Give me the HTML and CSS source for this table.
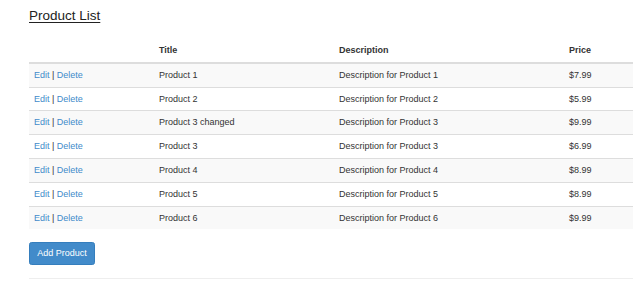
FILE: index.html
```html
<!DOCTYPE html>
<html>
<head>
<meta charset="utf-8">
<title>Product List</title>
<link rel="stylesheet" href="styles.css">
</head>
<body>
<div class="container">
  <h2 class="page-title">Product List</h2>
  <table class="table">
    <thead>
      <tr>
        <th class="col-actions"></th>
        <th class="col-title">Title</th>
        <th class="col-desc">Description</th>
        <th class="col-price">Price</th>
      </tr>
    </thead>
    <tbody>
      <tr><td><a href="#">Edit</a> | <a href="#">Delete</a></td><td>Product 1</td><td>Description for Product 1</td><td>$7.99</td></tr>
      <tr><td><a href="#">Edit</a> | <a href="#">Delete</a></td><td>Product 2</td><td>Description for Product 2</td><td>$5.99</td></tr>
      <tr><td><a href="#">Edit</a> | <a href="#">Delete</a></td><td>Product 3 changed</td><td>Description for Product 3</td><td>$9.99</td></tr>
      <tr><td><a href="#">Edit</a> | <a href="#">Delete</a></td><td>Product 3</td><td>Description for Product 3</td><td>$6.99</td></tr>
      <tr><td><a href="#">Edit</a> | <a href="#">Delete</a></td><td>Product 4</td><td>Description for Product 4</td><td>$8.99</td></tr>
      <tr><td><a href="#">Edit</a> | <a href="#">Delete</a></td><td>Product 5</td><td>Description for Product 5</td><td>$8.99</td></tr>
      <tr><td><a href="#">Edit</a> | <a href="#">Delete</a></td><td>Product 6</td><td>Description for Product 6</td><td>$9.99</td></tr>
    </tbody>
  </table>
  <button class="btn-primary" type="button">Add Product</button>
  <hr class="divider">
</div>
</body>
</html>
```

FILE: styles.css
```css
html, body {
  margin: 0;
  padding: 0;
  background: #fff;
}
body {
  font-family: "Liberation Sans", Arial, sans-serif;
  font-size: 9px;
  line-height: 12.8px;
  color: #333;
}
.container {
  padding: 0 9px 0 29px;
}
.page-title {
  margin: 8.8px 0 0;
  font-size: 13.5px;
  line-height: 14.85px;
  font-weight: normal;
  color: #222;
  text-decoration: underline;
  text-underline-offset: 1.5px;
}
.table {
  width: 100%;
  margin-top: 15.4px;
  margin-bottom: 12.8px;
  border-collapse: collapse;
  border-spacing: 0;
}
.table th,
.table td {
  padding: 5px 5px;
  text-align: left;
  vertical-align: top;
  line-height: 12.8px;
}
.table th {
  font-weight: bold;
  border-bottom: 2px solid #ddd;
  color: #333;
}
.table td {
  border-top: 1px solid #ddd;
}
.table tbody tr:nth-child(odd) {
  background: #f9f9f9;
}
.col-actions { width: 115px; }
.col-title { width: 170px; }
.col-desc { width: 220px; }
.table a {
  color: #428bca;
  text-decoration: none;
}
.btn-primary {
  display: block;
  font-family: "Liberation Sans", Arial, sans-serif;
  font-size: 9px;
  line-height: 12.8px;
  padding: 4px 7.25px;
  color: #fff;
  background: #428bca;
  border: 1px solid #357ebd;
  border-radius: 2.6px;
  margin: 0;
}
.divider {
  margin: 12.8px 0 0;
  border: 0;
  border-top: 1px solid #eee;
}
```
